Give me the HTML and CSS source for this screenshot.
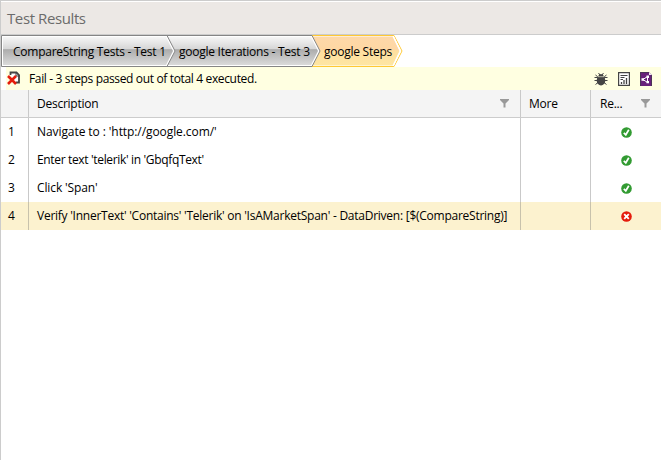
FILE: index.html
```
<!DOCTYPE html>
<html lang="en">
<head>
<meta charset="utf-8">
<title>Test Results</title>
<link rel="stylesheet" href="styles.css">
</head>
<body>
<svg class="defs" width="0" height="0">
  <defs>
    <symbol id="filter" viewBox="0 0 9 9"><path d="M0 0H9V1L5.5 4.5V8.5H3.5V4.5L0 1Z" fill="#999"/></symbol>
    <symbol id="pass" viewBox="0 0 11 11"><circle cx="5.5" cy="5.5" r="5.3" fill="#329b32"/><path d="M2.8 5.8L4.8 7.8L7.8 2.8" fill="none" stroke="#fff" stroke-width="1.7"/></symbol>
    <symbol id="fail" viewBox="0 0 11 11"><circle cx="5.5" cy="5.5" r="5.3" fill="#e51c0c"/><path d="M3.2 3.2L7.8 7.8M7.8 3.2L3.2 7.8" stroke="#fff" stroke-width="1.9"/></symbol>
  </defs>
</svg>
<main class="panel">
  <h1 class="title"><span>Test Results</span></h1>
  <nav class="crumbs">
    <svg class="crumb-shapes" width="403" height="32" viewBox="0 0 403 32">
      <defs>
        <linearGradient id="steel" x1="0" y1="0" x2="0" y2="1">
          <stop offset="0" stop-color="#f6f6f6"/><stop offset=".43" stop-color="#d6d6d6"/>
          <stop offset=".45" stop-color="#acacac"/><stop offset="1" stop-color="#dadada"/>
        </linearGradient>
        <linearGradient id="amber" x1="0" y1="0" x2="0" y2="1">
          <stop offset="0" stop-color="#fed8a9"/><stop offset=".45" stop-color="#fed7a3"/>
          <stop offset=".5" stop-color="#fedf9f"/><stop offset="1" stop-color="#fee6a2"/>
        </linearGradient>
      </defs>
      <path d="M310 .5H393L401 16L393 31.5H310Z" fill="#fff" stroke="#ffc933"/>
      <path d="M310 1.5H391.5L398.5 16L391.5 30.5H310Z" fill="url(#amber)"/>
      <path d="M392.3 1L399.5 16L392.3 31" fill="none" stroke="#fff" stroke-width="1.2"/>
      <path d="M165 .5H311L319 16L311 31.5H165Z" fill="#fff" stroke="#858585"/>
      <path d="M165 2H310L317 16L310 30H165Z" fill="url(#steel)"/>
      <path d="M.5 .5H166L174 16L166 31.5H.5Z" fill="#fff" stroke="#858585"/>
      <path d="M2 2H165L172 16L165 30H2Z" fill="url(#steel)"/>
    </svg>
    <span class="crumb crumb-test">CompareString Tests - Test 1</span>
    <span class="crumb crumb-iteration">google Iterations - Test 3</span>
    <span class="crumb">google Steps</span>
  </nav>
  <section class="status">
    <svg class="status-icon" width="14" height="15" viewBox="0 0 14 15">
      <path d="M3.5 4V1.5H9.5L12 4V11.5H9" fill="#fff" stroke="#444" stroke-width="1.8"/>
      <path d="M9 1V5H13" fill="none" stroke="#444"/>
      <path d="M1 5L9 13M9 5L1 13" stroke="#e51c0c" stroke-width="2.6"/>
    </svg>
    <span class="status-text">Fail - 3 steps passed out of total 4 executed.</span>
    <span class="tools">
      <svg width="14" height="14" viewBox="0 0 14 14"><path d="M4.5 1L6 3M9.5 1L8 3M0.5 5.5H13.5M0.5 8.5H13.5M1.5 12.5L4 10.5M12.5 12.5L10 10.5M1.5 3L4 5M12.5 3L10 5" stroke="#444"/><ellipse cx="7" cy="8.5" rx="4.3" ry="5" fill="#444"/><path d="M4 4.5Q4.5 2 7 2T10 4.5Z" fill="#444"/><path d="M3.5 4.7H10.5" stroke="#ffffe1" stroke-width=".6"/></svg>
      <svg width="12" height="14" viewBox="0 0 12 14"><path d="M.6 .6H11.4V13.4H.6Z" fill="#fff" stroke="#444" stroke-width="1.2"/><path d="M2.5 3.5H9.5M2.5 5.5H6.5M2.5 7.5H5" stroke="#444"/><path d="M3.5 12V10M6 12V8M8.5 12V6" stroke="#444" stroke-width="1.3"/></svg>
      <svg width="12" height="14" viewBox="0 0 12 14"><path d="M0 0H9L12 3V14H0Z" fill="#68217a"/><path d="M.5 14V.5H8.5L11.5 3.5V14" fill="none" stroke="#4b3556"/><path d="M9 0V3H12Z" fill="#eee"/><path d="M3 7.5L7.5 4.5V10.5L3 7.5" fill="none" stroke="#fff"/><path d="M1.5 6.3H4V8.7H1.5ZM6.5 3.6H9V6H6.5ZM6.5 9H9V11.3H6.5Z" fill="#fff"/></svg>
    </span>
  </section>
  <div class="grid head">
    <div></div>
    <div class="cell"><span>Description</span><svg class="funnel" width="9" height="9"><use href="#filter"/></svg></div>
    <div class="cell"><span>More</span></div>
    <div class="cell result-head"><span>Re...</span><svg class="funnel" width="9" height="9"><use href="#filter"/></svg></div>
  </div>
  <div class="grid row"><div class="num">1</div><div class="cell navigate">Navigate to : 'http://google.com/'</div><div></div><div class="result"><svg width="11" height="11"><use href="#pass"/></svg></div></div>
  <div class="grid row"><div class="num">2</div><div class="cell enter">Enter text 'telerik' in 'GbqfqText'</div><div></div><div class="result"><svg width="11" height="11"><use href="#pass"/></svg></div></div>
  <div class="grid row"><div class="num">3</div><div class="cell click">Click 'Span'</div><div></div><div class="result"><svg width="11" height="11"><use href="#pass"/></svg></div></div>
  <div class="grid row selected"><div class="num">4</div><div class="cell verify">Verify 'InnerText' 'Contains' 'Telerik' on 'IsAMarketSpan' - DataDriven: [$(CompareString)]</div><div></div><div class="result"><svg width="11" height="11"><use href="#fail"/></svg></div></div>
</main>
</body>
</html>
```
FILE: styles.css
```
* { box-sizing: border-box; }
body {
  margin: 0;
  background: #fff;
  color: #000;
  font: 12px/16px "Open Sans", "Noto Sans", sans-serif;
  letter-spacing: -0.25px;
  white-space: nowrap;
  overflow: hidden;
}
svg { display: block; flex: none; }
.defs { position: absolute; }
.panel { height: 460px; border-left: 1px solid #ccc; border-top: 1px solid #ccc; }
.title {
  height: 34px;
  margin: 0;
  padding: 0 0 0 6px;
  display: flex;
  align-items: center;
  background: #ece8e5;
  border-top: 1px solid #fff;
  border-bottom: 1px solid #ccc;
  color: #6b6b6b;
  font-size: 15px;
  font-weight: 400;
  letter-spacing: -0.4px;
}
.crumbs { position: relative; display: flex; height: 32px; }
.crumb-shapes { position: absolute; left: 0; top: 0; }
.crumb { position: relative; padding: 9px 0 0 12px; }
.crumb-test { width: 166px; }
.crumb-iteration { width: 145px; }
.status {
  height: 23px;
  margin-left: 5px;
  padding: 0 9px 0 1px;
  display: flex;
  align-items: center;
  background: #ffffe1;
}
.status-text { margin-left: 8px; letter-spacing: -0.35px; }
.tools { margin-left: auto; display: flex; align-items: center; gap: 10px; }
.grid { display: grid; grid-template-columns: 27px 492px 70px 1fr; height: 28px; }
.grid > div { display: flex; align-items: center; }
.grid > div:not(:first-child) { border-left: 1px solid #c9c9c9; }
.head { background: #f4f4f4; border-bottom: 1px solid #ccc; }
.cell { padding-left: 8px; }
.head .result-head { padding-left: 9px; padding-right: 11px; }
.head .cell:nth-child(2) { padding-right: 11px; }
.funnel { margin-left: auto; }
.num { padding-left: 7px; }
.navigate { letter-spacing: -0.08px; }
.enter { letter-spacing: -0.34px; }
.click { letter-spacing: -0.12px; }
.result { justify-content: center; }
.selected { background: #fcf2cf; }
.selected > div:not(:first-child) { border-color: #c8c2ac; }
```
